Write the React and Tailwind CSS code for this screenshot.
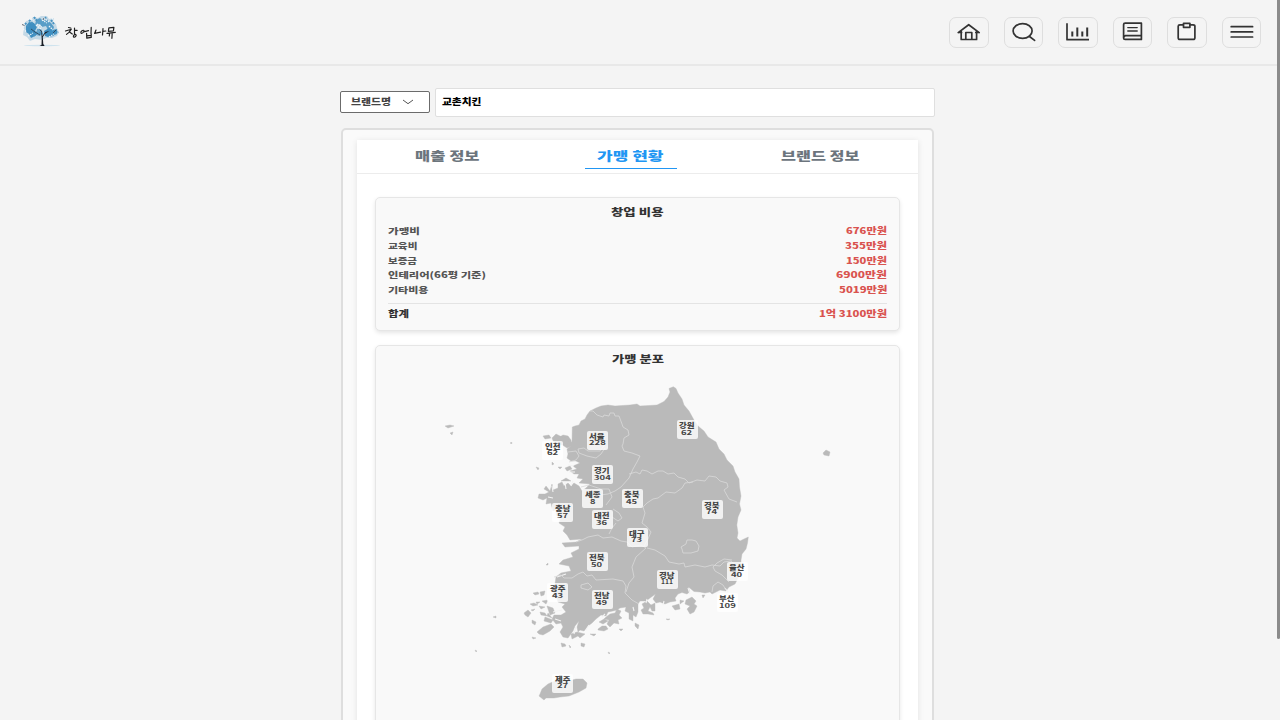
import React from "react";

const costs = [
  ["가맹비", "676만원"],
  ["교육비", "355만원"],
  ["보증금", "150만원"],
  ["인테리어(66평 기준)", "6900만원"],
  ["기타비용", "5019만원"],
];

const regions = [
  ["서울", 228, 597, 440],
  ["인천", 62, 552.5, 450],
  ["강원", 62, 687, 429.5],
  ["경기", 304, 602, 474.5],
  ["세종", 8, 592.5, 498.5],
  ["충북", 45, 632, 498.5],
  ["충남", 57, 562.5, 512.5],
  ["대전", 36, 602, 519.5],
  ["경북", 74, 712, 509],
  ["대구", 73, 637, 537],
  ["전북", 50, 597, 561.5],
  ["경남", 111, 667, 579],
  ["울산", 40, 737, 571.5],
  ["부산", 109, 727, 602.5],
  ["광주", 43, 557.5, 592.5],
  ["전남", 49, 602, 599.5],
  ["제주", 27, 562.5, 683],
];

function Wide({ children, w, size, weight = 900, h = 16, className = "" }) {
  return (
    <svg width={w} height={h} className={"block shrink-0 overflow-visible " + className}>
      <text x="0" y={h / 2 + size * 0.37} textLength={w} lengthAdjust="spacingAndGlyphs" fontSize={size} fontWeight={weight} fill="currentColor">
        {children}
      </text>
    </svg>
  );
}

const costWidths = [32, 29.5, 29, 98, 40.5];
const valueWidths = [41, 42, 41, 51, 48.5];

function Logo() {
  return (
    <svg width="100" height="36" viewBox="20 13 100 36" className="block">
      <ellipse cx="42" cy="45.5" rx="18" ry=".7" fill="#cfe3ee" />
      <path d="M24 27l2-6 5-1 2-3 5 1 3-2 6 0 2 3 5-1-1 4 3 2 1 4 2 4-2 4-5 2-6 0-4 2-7-1-5 2-3-4-4-2z" fill="#b4d0e2" opacity=".75" />
      <g fill="#3f8fc1">
        <path d="M26 26l3-4 5 1 3 4-2 4 3 2-3 3-4 2-2-4-3-2z" />
        <path d="M36 20l4-2 3 3 4-1 4 3 3 4-1 3-5 0-2-4-4 1-2-3-5 1z" opacity=".8" />
        <path d="M44 31l5-3 3 2 5-1 0 4-4 3-5 1-3-1z" />
        <path d="M37 29l4 0 2 4-3 3-4-1z" opacity=".7" />
      </g>
      <path d="M25 23l4 4m0-7l4 4m1-7l3 4m2 12l4 1m2-17l2 4m4-1l3 4m-20 12l3-4m18 2l3-2" stroke="#4a94c2" strokeWidth="2" strokeDasharray="2 1" />
      <path d="M29 18l5 3m10-3l5 4m3-4l3 3m-19 4l5 4m8-3l4 4m-25 6l5-3m16 4l5-3m-17-10l5 3m-19 2l4 3m15-12l5 3" stroke="#eef5f9" strokeWidth="1.2" strokeDasharray="1.5 1" />
      <path d="M39.5 46l2-1 .2-6-.4-7-2-3 2.4 2 .6 5 3-4 4-1-4.5 3-2 3 .5 7 1.3 2z" fill="#181d25" />
      <path d="M22 24.5l2.5 1M31 29l4 3 5 3M53 33l3-3M43 20l1-2" fill="none" stroke="#27303c" strokeWidth=".7" />
      <g fill="none" stroke="#202020" strokeWidth="1.2" strokeLinecap="round" strokeLinejoin="round">
        <path d="M68.5 27.5l2.3.5M65.5 31l5.8-1.8-2.3 3.2-2.5 2M69.5 32l2.8 2M74.5 28v6M74.7 30.4h2.4M73.6 35.6c1.5-2 3.3-1 2.2.6s-3 1.3-2.2-.6z" />
        <path d="M82 30.8c-2.2 1.6-1 3.6 1 1.8s1-3.2-1-1.8zM84.5 31.6l4-1M91.2 27.4l-.2 6M86.6 33.4l.2 4.8 4.4-.8v-3.6M86.8 35.8l4-.5" />
        <path d="M96 30l-1.4 3.4 6-1.2M103 28.5l-.5 6.5M102.8 31.4l3-.4" />
        <path d="M108.8 28l-.4 3.4 5-.5.5-3.6-5 .5M107 33.4l8.3-1M112.2 33.3l-.3 5M109.6 33.4l-.3 2.6" />
      </g>
    </svg>
  );
}

const iconPaths = [
  <path key="h" d="M9.2 15.6L19.7 7.7l10.5 7.9M12.2 14v8.5h15.4V14M16.8 22.3v-6.8h6v6.8M9.6 15.4h3M26.8 15.4h3" />,
  <g key="s"><ellipse cx="18.6" cy="14" rx="9.5" ry="7.4" /><path d="M25.2 19.3l5.4 4.1" /></g>,
  <g key="c" strokeLinecap="butt"><path d="M9 6.2v16.5h22" /><path d="M14.3 14.6v4.9M19.3 10.4v9.1M24.3 14.6v4.9M29.2 10.4v9.1" strokeWidth="2" /></g>,
  <g key="b"><path d="M10.6 21V7.6q0-1.4 1.6-1.4h16.2v16.2H12.1q-1.5 0-1.5-1.4t1.5-2.3h16.2" /><path d="M14.8 10.6h9.4M14.8 14h9.4" strokeWidth="1.4" /></g>,
  <g key="p"><path d="M16.3 7.8h-3.4q-1.7 0-1.7 1.5v11.4q0 1.7 1.7 1.7h13.2q1.8 0 1.8-1.7V9.3q0-1.5-1.8-1.5h-2.8" /><path d="M16.5 6.3h6.4v4h-6.4z" /></g>,
  <path key="m" d="M9.2 9.7h21.4M9.2 14.9h21.4M9.2 20h21.4" />,
];

const mainland =
  "M572.3 427L575 426 579 425 581 421 585 419 587 415 590 411 596 408 601 406 608 405 615 406 622 405.5 630 405 637 404 640 406 649 405.5 657 405 664 401.5 668 397 670 392 669 388.5 673.3 386.7 676 388.5 678 393 682 399 684 405 689 411 694 420 698 426 704 431 708 437 716 442 719 449 724 454 727 460 733 466 735 472 739 479 739.5 487 741 496 739.5 504 741 510 738 517 736.8 525 738 533 737 538 740 541 744 539 748.3 537 747.5 543 746 549 742 554 741 560 741 568 738 578 735 584 729 587 726 591 720 590 716 592 712 594 710 592 705 593 700 592 694 591.5 688.5 587 689.5 592 687 594 682 592.5 678 594 675 598 676 601 670 602 665 604 660 602 656 603 653 599 655.5 594 650 598 646 601 640 601 638 604 638 612 636 617 633 615 633 621 629 619 629 613 625 611 626 607 620 608 617 610 613 611 608 612 606 616 601 615 596 619 592 623 588 626 584 631 580 630 578 632 577 627 579 621 575 626 573 631 568 638 563 637 560 632 563 627 561 623 556 624 552 619 554 615 561 615 566 612 562 607 565 604 558 602 557 598 552 597 554 592 551.5 589 555 584 556 577 561 573 571 571 569 566 559 564 563 560 573 557 571 553 579 549 579 546 565 547 562 543 576 542 582 539 570 540 567 535 563 531 565 527 559 523 561 518 556 515 557 509 553 511 551 503 546 504 547 498 543 500 538 498 539 494 545 494 549 492 544 489 546 486 550 491 552 484 553 490 558 488 558 484 562 482 564 486 568 483 571 486 574 483 579 486 582 491 586 488 590 484 579 483 583 479 577 478 579 474 574 474 570 471 577 469 573 466 580 463 576 461 571 461 567 458 568 454 567 449 571 446 568 443 572 442z";

const isles = [
  "M558 438l5-3 5 1 3 4 1 6-5 2-6-4z",
  "M543 436l6-1 2 3-6 1zM552 438l4-4 6 3 6 1 1 5-8 2-7-2z",
  "M558 467l4 0-2 2zM565 468l5-2 2 3-5 2zM561 481l5-3 5 3-4 0zM552 462l2 2-2 1z",
  "M445 426l5-1 4 1-6 2zM450 433l3-1-1 3zM510.5 442.5l1.5 0v1h-1.5zM536 467l3 1-1 2z",
  "M823 453l3-3 4 2-1 4-5-1z",
  "M546 565l2-2v2zM533 593l5-1 1 2-4 1zM540 592l5-1-1 4-3 1zM530 604l4-1 4 2-5 1zM536 602l4 0-3 2zM539 606l6 1-4 2zM542 601l6-1-2 4zM524 613l4-3 3 3-3 4-3-2zM531 610l4-1-2 2zM532 620l4 2-1 3-3-2zM540 612l5 1 2 3-6-1zM547 606l6 2 2 5-5 2zM545 617l8 3-2 3-7-2zM548 613l4 5-5-2z",
  "M537 632l6-5 8-3 3 3-4 4-7 4-4-1z",
  "M532 637l4 1-3 1zM493 617l3-1v2zM475 650l2 1-1 1z",
  "M561 643l4 1 1 2-4 1zM569 645l2 2-1 1zM581 643l4 1-1 3-3-1zM590 634l6 0-2 2zM571 634l6-2 8 2-5 4-2-2-6 3z",
  "M598 629l4-3 4 0 2 3-4 2-6-1zM599 622l5-3 4 2-5 3zM606 617l4-3 5-1 2-4 4 2-2 4 3 3-4 2 1 4-5-1-4 4-3-3 2-4-5-1z",
  "M619 629l4 0-2 2zM635 623l4 2-1 4-3-3zM642 604l5-3 4 4 4-2 0 8-3 0-2-4-2 4 5 2 1 2-6-1-5 0-2-4 3-2z",
  "M672 606l7-2 1 5-5 1zM686 600l6-3 4 4-2 3 3 2-3 6-4 2-3-5 3-3-5-2zM680 600l4 1-4 3zM666 619l4 0-2 1zM702 595l3 0-2 3zM608 652l2 1-1 1z",
  "M540 694l2-5 6-5 9-4 12 1 7-2 7 0 4 4-1 5-7 4-10 4-9 1-6 1-8 0-2 2-5-4z",
];

// Narrow bays cut into the west and south coasts.
const bays =
  "M565 482l1 7M573 481l-2 5M548 497l5 1M552 486l1 6M556 508l3 5M553 612l9-2M555 619l6 2M574 634l2-8M566 574l-9 3M586 630l3-5M602 617l3-3M633 607l1 4M647 599l-1 4M663 605l1-4M690 594l-2-6M728 592l-3-4M568 465l6 1M569 472l6 0";

const borders = [
  "M590 411l3 0 4 4 6 2 1-2 5 1 1-3 4 0 1 3 4 0 3 8 1 3 5 3 1 5-5 3-1 6-1 2 2 5 8 2 8 3-3 6-4 7-4 9-8 9-6 4-7 3-8 1",
  "M578 449l6-1 4 3 12 0 3-4 2-2M578 449l1 4 8 3 9 2 5-4 4-6M568 452l8-1 3 5-3 4-7 2",
  "M629 474l7-2 4 2 2-4 5 1 5 3 6-3 5 0 5 3 6-1 4 4 7 2 4 4 8-3 8 1 4-5 7 1 4 4 7 2 1 4-4 3 5 9 8 3",
  "M581 487l8-2 12 4 8 0 3 8-6 8",
  "M693 482l-8 1-3 5-7 5-9-1-8 6-5 1-6 4-4 4 2 6-3 10 5 4 4 5-3 7-4 7",
  "M576 542l6-2 6-3 10-2 5 3 9-1 9 4 6 1 5 5 9-2 5 3-10 9-4 10 2 10-5 6-3 9",
  "M647 548l8 2 10 6 4 6 10 2 5-1 1 4 10-2 10 2 7-2 8 1 4-4 7-1 5 5 8 2",
  "M732 560l-8-1-7 4-4 4 2 4 7 4 7 7M712 592l1-6 5-4 5 3 3 5",
  "M681 547l5-3 1-4 5 0 4 1 3 5-1 5-7 2-8 0-1-4z",
  "M554 577l7-2 3 3 8 0 6-4 5-2 4 4 5-1 4 5 17-1 10 2 3 5-1 7 7 7 7 4",
  "M581 585l7-2 4 4-4 3-7-2z",
  "M612 517l6 4 4-3-3-5-6-4M616 523l-4 5-3 6",
];

function KoreaMap() {
  return (
    <svg width="523" height="396" viewBox="376 346 523 396" className="absolute left-0 top-0">
      <g fill="#bababa" stroke="#bababa" strokeWidth=".4" strokeLinejoin="round">
        <path d={mainland} />
        {isles.map((d) => <path key={d} d={d} />)}
      </g>
      <path d={bays} fill="none" stroke="#f3f3f3" strokeWidth="1.1" />
      <g fill="none" stroke="#d9d9d9" strokeWidth=".8" strokeLinejoin="round">
        {borders.map((d) => <path key={d} d={d} />)}
      </g>
    </svg>
  );
}

function Tab({ label, w, active }) {
  return (
    <div className="flex flex-1 justify-center">
      <div className={active ? "flex h-[29px] w-[92px] justify-center border-b border-[#2196f3] text-[#2196f3]" : "flex h-[29px] justify-center text-[#6c757d]"}>
        <Wide w={w} size={12.5} h={32}>{label}</Wide>
      </div>
    </div>
  );
}

export default function App() {
  return (
    <div className="flex h-[720px] w-[1280px] overflow-hidden bg-[#f4f4f4] font-['Noto_Sans_CJK_KR','Noto_Sans',sans-serif]">
      <div className="flex w-[1277px] flex-col">
        <header className="flex h-[66px] shrink-0 items-start justify-between border-b-2 border-[#e8e8e8] pl-5 pr-[16px]">
          <div className="pt-[13px]"><Logo /></div>
          <nav className="flex gap-[15px] pt-[16.5px]">
            {iconPaths.map((icon, i) => (
              <button key={i} className="h-[31px] w-[39.5px] rounded-[7px] border border-[#dedede]" aria-label={["홈", "검색", "통계", "목록", "게시판", "메뉴"][i]}>
                <svg width="40" height="31" viewBox="0 0 40 31" className="-ml-px -mt-px block" fill="none" stroke="#333" strokeWidth="1.7" strokeLinecap="round" strokeLinejoin="round">{icon}</svg>
              </button>
            ))}
          </nav>
        </header>

        <main className="ml-[340px] flex w-[595px] flex-col pt-[22px]">
          <div className="flex items-center gap-[5px]">
            <div className="mb-[2px] flex h-[22px] w-[90px] items-center rounded-[2px] border border-[#6b6b6b] bg-white pl-[10px] text-[#444]">
              <Wide w={40} size={9}>브랜드명</Wide>
              <svg width="12" height="6" viewBox="0 0 12 6" className="ml-[11px]" fill="none" stroke="#555" strokeWidth="1"><path d="M1 1l5 3.7L11 1" /></svg>
            </div>
            <div className="flex h-[29px] w-[499.5px] items-center rounded-[2px] border border-[#dfdfdf] bg-white pb-[2px] pl-[6px] text-black">
              <Wide w={39.5} size={9}>교촌치킨</Wide>
            </div>
          </div>

          <section className="ml-px mt-[11px] h-[700px] w-[593px] rounded-[5px] border-2 border-[#dedede] bg-[#fafafa] px-[14px] pt-[10px]">
            <div className="h-[680px] w-[561px] bg-white shadow-[0_1px_6px_rgba(0,0,0,0.1)]">
              <div className="flex h-[34px] border-b border-[#ececec]">
                <div className="flex w-[181px]"><Tab label="매출 정보" w={64.5} /></div>
                <div className="flex w-[185px]"><Tab label="가맹 현황" w={66.5} active /></div>
                <div className="flex w-[194px]"><Tab label="브랜드 정보" w={78.5} /></div>
              </div>

              <div className="flex flex-col gap-[14px] px-[18px] pt-[23px]">
                <div className="flex h-[134px] flex-col rounded-[5px] border border-[#e6e6e6] bg-[#f9f9f9] px-3 shadow-[0_2px_4px_rgba(0,0,0,0.1)]">
                  <div className="flex justify-center pt-[5.5px] text-[#333]"><Wide w={52.5} size={10.2}>창업 비용</Wide></div>
                  <div className="flex flex-col pt-[3.8px]">
                    {costs.map(([name, value], i) => (
                      <div key={name} className="flex h-[14.9px] items-center justify-between">
                        <Wide w={costWidths[i]} size={8.5} className="text-[#555]">{name}</Wide>
                        <Wide w={valueWidths[i]} size={8.8} className="text-[#d9534f]">{value}</Wide>
                      </div>
                    ))}
                  </div>
                  <div className="mt-[5.5px] flex items-center justify-between border-t border-[#e4e4e4] pt-[2px]">
                    <Wide w={21} size={9} className="text-[#333]">합계</Wide>
                    <Wide w={68} size={9} className="text-[#d9534f]">1억 3100만원</Wide>
                  </div>
                </div>

                <div className="relative h-[420px] rounded-[5px] border border-[#e6e6e6] bg-[#f9f9f9] shadow-[0_2px_4px_rgba(0,0,0,0.1)]">
                  <div className="flex justify-center pt-[5px] text-[#333]"><Wide w={52} size={10.2}>가맹 분포</Wide></div>
                  <KoreaMap />
                  {regions.map(([name, n, x, y]) => {
                    const s = String(n);
                    return (
                      <div
                        key={name}
                        className="absolute flex h-[19px] w-[21px] flex-col items-center rounded-[2px] bg-white/80 pt-[2px] text-[#444]"
                        style={{ left: x - 386.5, top: y - 355.5 }}
                      >
                        <Wide w={15.5} size={7} h={7.5}>{name}</Wide>
                        <Wide w={s === "111" ? 12 : s === "8" ? 5.5 : s.length * 5.6} size={6.5} h={6} weight={700}>{s}</Wide>
                      </div>
                    );
                  })}
                </div>
              </div>
            </div>
          </section>
        </main>
      </div>
      <div className="h-[639px] w-[3px] rounded-b bg-[#8b8b8b]" />
    </div>
  );
}
